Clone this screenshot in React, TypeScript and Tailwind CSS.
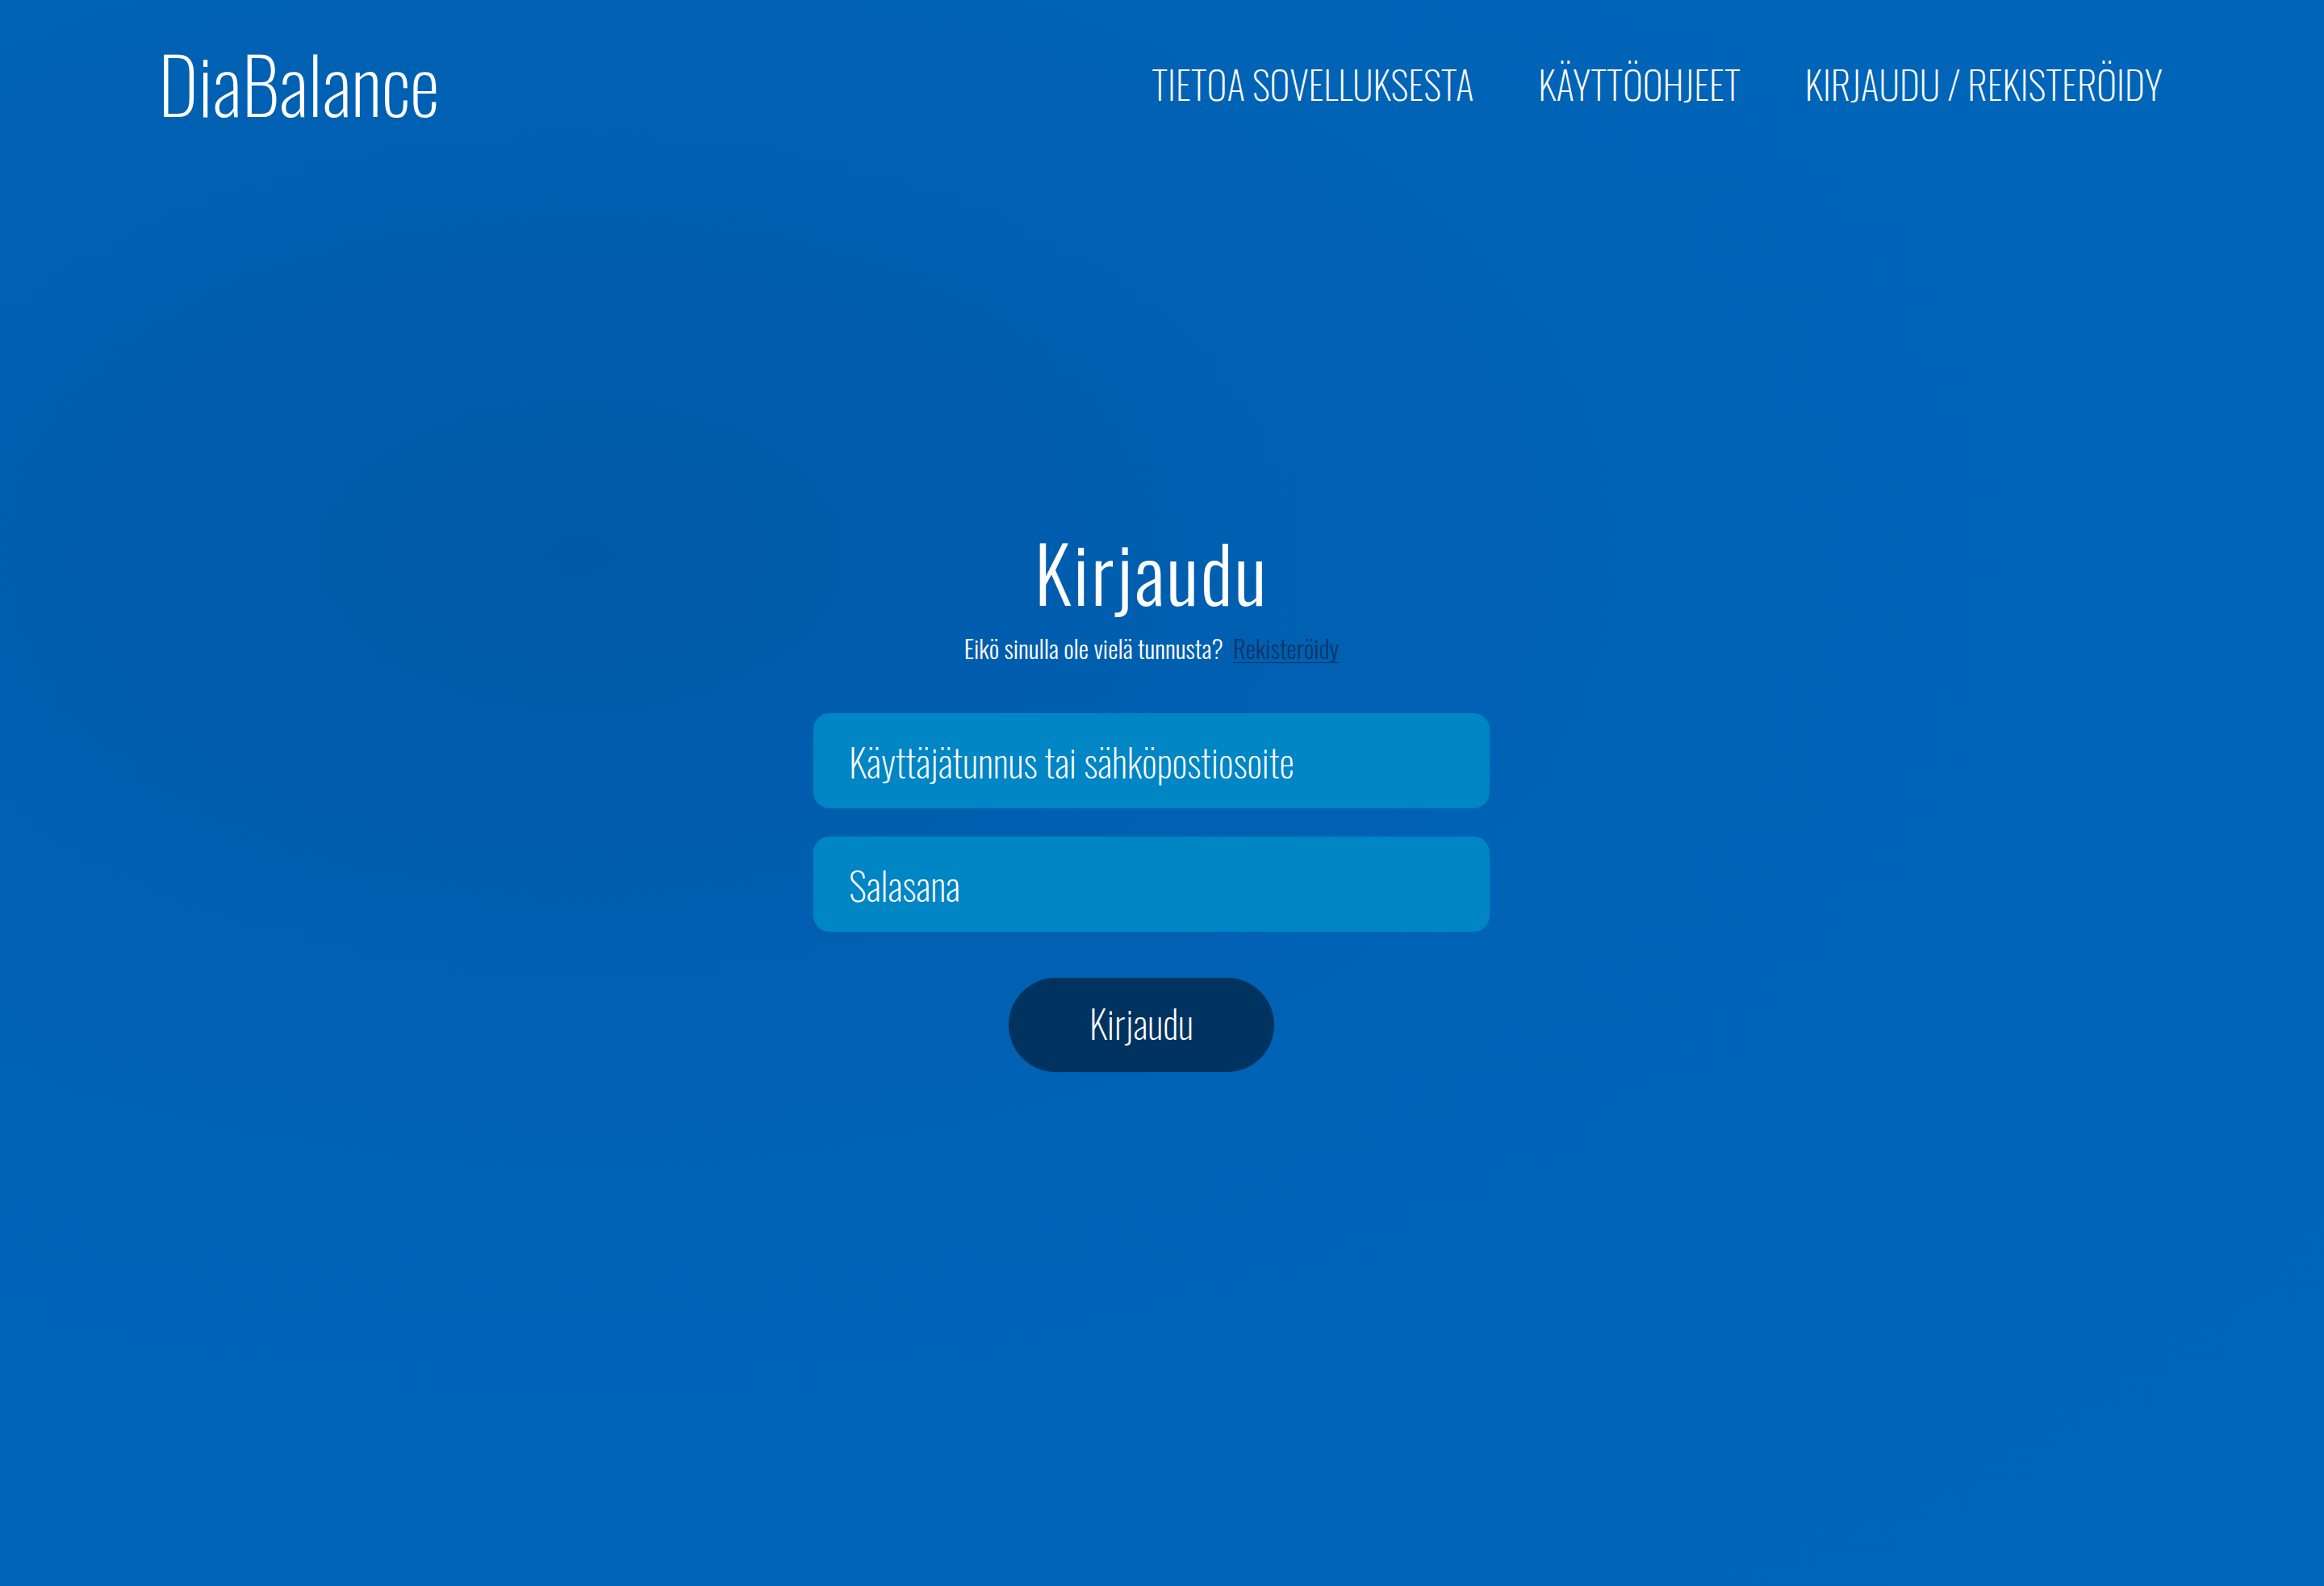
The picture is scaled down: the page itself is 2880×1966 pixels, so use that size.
import React from "react";

export default function App() {
  return (
    <div className="min-h-screen w-full bg-[radial-gradient(ellipse_at_25%_35%,#0059a8_0%,#0063b6_45%,#0066bb_100%)] text-white font-['Oswald','Roboto_Condensed',sans-serif] font-extralight">
      <header className="flex items-start justify-between pl-[196px] pr-[200px] pt-[54px]">
        <div className="text-[96px] leading-none">DiaBalance</div>
        <nav className="mt-[26px] flex items-center gap-[80px] text-[48px] leading-none">
          <a href="#">TIETOA SOVELLUKSESTA</a>
          <a href="#">KÄYTTÖOHJEET</a>
          <a href="#">KIRJAUDU / REKISTERÖIDY</a>
        </nav>
      </header>
      <main className="flex flex-col items-center pr-[26px] pt-[510px]">
        <h1 className="text-[96px] font-light leading-none tracking-[2.5px]">Kirjaudu</h1>
        <p className="mt-[32px] text-[31px] font-light leading-none">
          Eikö sinulla ole vielä tunnusta?
          <a href="#" className="ml-[12px] text-[#0b3566] underline decoration-1 underline-offset-4">Rekisteröidy</a>
        </p>
        <form className="mt-[65px] flex flex-col items-center gap-[35px]">
          <input
            className="h-[118px] w-[838px] rounded-[20px] bg-[#0085c5] px-[44px] text-[48px] font-extralight text-white outline-none placeholder:text-white"
            placeholder="Käyttäjätunnus tai sähköpostiosoite"
          />
          <input
            type="password"
            className="h-[118px] w-[838px] rounded-[20px] bg-[#0085c5] px-[44px] text-[48px] font-extralight text-white outline-none placeholder:text-white"
            placeholder="Salasana"
          />
          <button
            type="button"
            className="mr-[25px] mt-[22px] h-[117px] w-[329px] rounded-full bg-[#00335f] pb-[6px] text-[48px] font-extralight text-white"
          >
            Kirjaudu
          </button>
        </form>
      </main>
    </div>
  );
}
